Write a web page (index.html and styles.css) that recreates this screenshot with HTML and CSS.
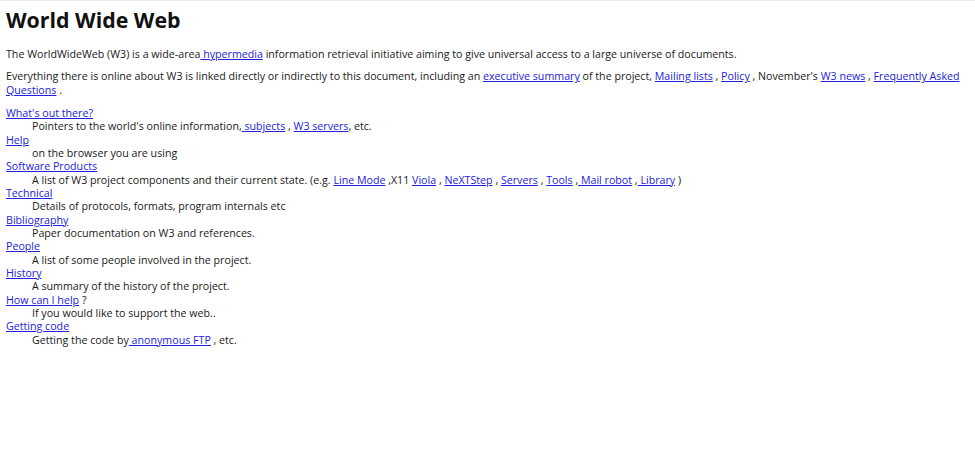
FILE: index.html
```html
<!DOCTYPE html>
<html lang="en">
<head>
    <meta charset="UTF-8" />
    <title>The World Wide Web project</title>
    <link rel="stylesheet" href="styles.css">
</head>
<body>
    <h1>World Wide Web</h1>
    <p>The WorldWideWeb (W3) is a wide-area<a href="#"> hypermedia</a> information retrieval initiative aiming to give universal access to a large universe of documents.</p>
    <p>Everything there is online about W3 is linked directly or indirectly to this document, including an <a href="#">executive summary</a> of the project, <a href="#">Mailing lists</a> , <a href="#">Policy</a> , November's <a href="#">W3 news</a> , <a href="#">Frequently Asked Questions</a> .</p>
    <dl>
        <dt><a href="#">What's out there?</a></dt>
        <dd>Pointers to the world's online information,<a href="#"> subjects</a> , <a href="#">W3 servers</a>, etc.</dd>
        <dt><a href="#">Help</a></dt>
        <dd>on the browser you are using</dd>
        <dt><a href="#">Software Products</a></dt>
        <dd>A list of W3 project components and their current state. (e.g. <a href="#">Line Mode</a> ,X11 <a href="#">Viola</a> , <a href="#">NeXTStep</a> , <a href="#">Servers</a> , <a href="#">Tools</a> ,<a href="#"> Mail robot</a> ,<a href="#"> Library</a> )</dd>
        <dt><a href="#">Technical</a></dt>
        <dd>Details of protocols, formats, program internals etc</dd>
        <dt><a href="#">Bibliography</a></dt>
        <dd>Paper documentation on W3 and references.</dd>
        <dt><a href="#">People</a></dt>
        <dd>A list of some people involved in the project.</dd>
        <dt><a href="#">History</a></dt>
        <dd>A summary of the history of the project.</dd>
        <dt><a href="#">How can I help</a> ?</dt>
        <dd>If you would like to support the web..</dd>
        <dt><a href="#">Getting code</a></dt>
        <dd>Getting the code by<a href="#"> anonymous FTP</a> , etc.</dd>
    </dl>
</body>
</html>
```

FILE: styles.css
```css
body {
    margin: 0;
    padding: 0 5px;
    font-family: "Open Sans", Arial, sans-serif;
    font-size: 10.67px;
    line-height: 13.33px;
    color: #1a1a1a;
    background: #fff;
    border-top: 1px solid #e8e8e8;
}

h1 {
    font-size: 21.33px;
    line-height: 26px;
    font-weight: bold;
    margin: 6px 0 15px 1px;
    color: #111;
}

p {
    margin: 0 0 9px 1px;
}

a {
    color: #2222dd;
}

dl {
    margin: 10px 0 0 1px;
}

dd {
    margin-left: 26px;
}
```
